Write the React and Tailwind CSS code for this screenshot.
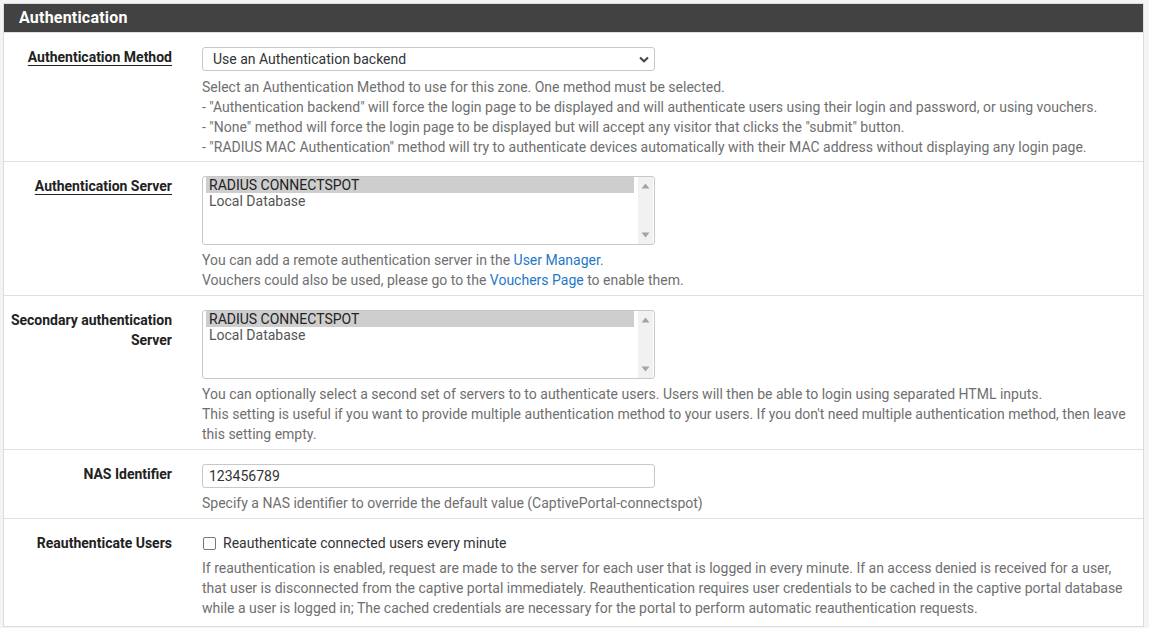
import React from "react";

const Label = ({ children, underline }) => (
  <div className="w-[168px] shrink-0 text-right text-[14px] leading-[20px] font-bold text-[#222]">
    {underline ? <span className="underline decoration-1 underline-offset-[3px]">{children}</span> : children}
  </div>
);

const Help = ({ children, className = "" }) => (
  <div className={"text-[14px] leading-[20px] text-[#6f6f6f] " + className}>{children}</div>
);

const Listbox = () => (
  <div className="relative w-[453px] h-[69px] border border-[#c8c8c8] rounded-[3px] bg-white flex">
    <div className="flex-1 pl-[3px] pt-0 text-[14px] leading-[16px]">
      <div className="bg-[#cecece] text-[#222] pl-[3px] w-[428px]">RADIUS CONNECTSPOT</div>
      <div className="text-[#555] pl-[3px]">Local Database</div>
    </div>
    <div className="w-[15px] mr-[1px] bg-[#f1f1f1] flex flex-col items-center justify-between py-[6px]">
      <svg width="9" height="6" viewBox="0 0 9 6"><path d="M0.5 5.5 L4.5 0.5 L8.5 5.5 Z" fill="#a3a3a3" /></svg>
      <svg width="9" height="6" viewBox="0 0 9 6"><path d="M0.5 0.5 L4.5 5.5 L8.5 0.5 Z" fill="#a3a3a3" /></svg>
    </div>
  </div>
);

const Link = ({ children }) => <span className="text-[#1f78c8]">{children}</span>;

export default function App() {
  return (
    <div className="w-[1149px] h-[628px] bg-[#f4f4f4] pt-[3px] pl-[3px] overflow-hidden" style={{ fontFamily: "Roboto, 'Liberation Sans', sans-serif" }}>
      <div className="w-[1141px] border border-[#dcdcdc] bg-white">
        <div className="h-[28px] bg-[#424242] text-white font-bold text-[16px] leading-[28px] pl-[15px] tracking-[0.2px]">
          Authentication
        </div>

        {/* Row 1 */}
        <div className="flex border-t border-[#e0e0e0] pt-[14px] pb-[4px]">
          <Label underline>Authentication Method</Label>
          <div className="ml-[30px] w-[926px]">
            <div className="relative w-[453px] h-[24px] border border-[#c8c8c8] rounded-[3px] bg-white flex items-center pl-[10px] text-[14px] text-[#333]">
              Use an Authentication backend
              <svg className="absolute right-[5px] top-[8px]" width="10" height="7" viewBox="0 0 10 7">
                <path d="M1 1.5 L5 5.3 L9 1.5" stroke="#444" strokeWidth="2" fill="none" />
              </svg>
            </div>
            <Help className="mt-[6px]">
              Select an Authentication Method to use for this zone. One method must be selected.<br />
              - "Authentication backend" will force the login page to be displayed and will authenticate users using their login and password, or using vouchers.<br />
              - "None" method will force the login page to be displayed but will accept any visitor that clicks the "submit" button.<br />
              - "RADIUS MAC Authentication" method will try to authenticate devices automatically with their MAC address without displaying any login page.
            </Help>
          </div>
        </div>

        {/* Row 2 */}
        <div className="flex border-t border-[#e0e0e0] pt-[14px] pb-[5px]">
          <Label underline>Authentication Server</Label>
          <div className="ml-[30px] w-[926px]">
            <Listbox />
            <Help className="mt-[5px]">
              You can add a remote authentication server in the <Link>User Manager</Link>.<br />
              Vouchers could also be used, please go to the <Link>Vouchers Page</Link> to enable them.
            </Help>
          </div>
        </div>

        {/* Row 3 */}
        <div className="flex border-t border-[#e0e0e0] pt-[14px] pb-[5px]">
          <Label>Secondary authentication Server</Label>
          <div className="ml-[30px] w-[926px]">
            <Listbox />
            <Help className="mt-[5px]">
              You can optionally select a second set of servers to to authenticate users. Users will then be able to login using separated HTML inputs.<br />
              This setting is useful if you want to provide multiple authentication method to your users. If you don't need multiple authentication method, then leave this setting empty.
            </Help>
          </div>
        </div>

        {/* Row 4 */}
        <div className="flex border-t border-[#e0e0e0] pt-[14px] pb-[5px]">
          <Label>NAS Identifier</Label>
          <div className="ml-[30px] w-[926px]">
            <div className="w-[453px] h-[24px] border border-[#c8c8c8] rounded-[3px] bg-white flex items-center pl-[6px] text-[14px] text-[#333]">
              123456789
            </div>
            <Help className="mt-[5px]">
              Specify a NAS identifier to override the default value (CaptivePortal-connectspot)
            </Help>
          </div>
        </div>

        {/* Row 5 */}
        <div className="flex border-t border-[#e0e0e0] pt-[14px] pb-[8px]">
          <Label>Reauthenticate Users</Label>
          <div className="ml-[30px] w-[926px]">
            <div className="flex items-center h-[20px] text-[14px] text-[#333]">
              <span className="ml-[1px] w-[13px] h-[13px] border border-[#767676] rounded-[2px] bg-white" />
              <span className="ml-[7px]">Reauthenticate connected users every minute</span>
            </div>
            <Help className="mt-[5px]">
              If reauthentication is enabled, request are made to the server for each user that is logged in every minute. If an access denied is received for a user, that user is disconnected from the captive portal immediately. Reauthentication requires user credentials to be cached in the captive portal database while a user is logged in; The cached credentials are necessary for the portal to perform automatic reauthentication requests.
            </Help>
          </div>
        </div>
      </div>
    </div>
  );
}
